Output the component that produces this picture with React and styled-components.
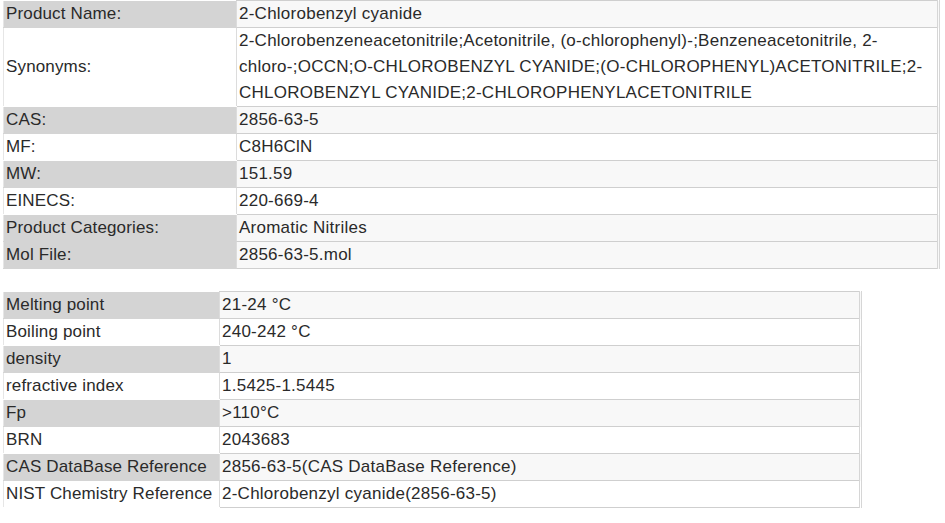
import styled, { createGlobalStyle } from "styled-components";

const GlobalStyle = createGlobalStyle`
  html, body {
    margin: 0;
    padding: 0;
    background: #fff;
  }
  body {
    font-family: "Liberation Sans", Arial, sans-serif;
    color: #2a2a2a;
  }
`;

const Page = styled.div`
  display: flex;
  flex-direction: column;
  gap: 22px;
  padding: 0 0 0 3px;
`;

const Table = styled.table`
  width: ${(p) => p.$width}px;
  border-collapse: collapse;
  border-right: 3px double #d6d6d6;
  font-size: 17px;
  letter-spacing: 0.25px;
  line-height: 26px;
`;

const Label = styled.td`
  width: ${(p) => p.$width}px;
  padding: 0 0 0 2px;
  background: ${(p) => (p.$shade ? "#d4d4d4" : "#fff")};
  border-bottom: 1px solid ${(p) => (p.$shade ? "#d4d4d4" : "#fff")};
  border-left: 1px solid #e6e6e6;
  vertical-align: middle;
  white-space: nowrap;
  letter-spacing: 0.15px;
`;

const Value = styled.td`
  padding: 0 4px 0 2px;
  background: ${(p) => (p.$shade ? "#f8f8f8" : "#fff")};
  border-bottom: 1px solid #cfcfcf;
  border-left: 1px solid #dcdcdc;
  border-top: 1px solid #cfcfcf;
  vertical-align: middle;
`;

const basics = [
  ["Product Name:", "2-Chlorobenzyl cyanide", true],
  [
    "Synonyms:",
    "2-Chlorobenzeneacetonitrile;Acetonitrile, (o-chlorophenyl)-;Benzeneacetonitrile, 2-chloro-;OCCN;O-CHLOROBENZYL CYANIDE;(O-CHLOROPHENYL)ACETONITRILE;2-CHLOROBENZYL CYANIDE;2-CHLOROPHENYLACETONITRILE",
    false,
  ],
  ["CAS:", "2856-63-5", true],
  ["MF:", "C8H6ClN", false],
  ["MW:", "151.59", true],
  ["EINECS:", "220-669-4", false],
  ["Product Categories:", "Aromatic Nitriles", true],
  ["Mol File:", "2856-63-5.mol", true],
];

const props = [
  ["Melting point", "21-24 °C"],
  ["Boiling point", "240-242 °C"],
  ["density", "1"],
  ["refractive index", "1.5425-1.5445"],
  ["Fp", ">110°C"],
  ["BRN", "2043683"],
  ["CAS DataBase Reference", "2856-63-5(CAS DataBase Reference)"],
  ["NIST Chemistry Reference", "2-Chlorobenzyl cyanide(2856-63-5)"],
];

export default function App() {
  return (
    <>
      <GlobalStyle />
      <Page>
        {/* Datos básicos del producto */}
        <Table $width={937}>
          <tbody>
            {basics.map(([k, v, shade]) => (
              <tr key={k}>
                <Label $width={230} $shade={shade}>{k}</Label>
                <Value $shade={shade}>{v}</Value>
              </tr>
            ))}
          </tbody>
        </Table>

        {/* Propiedades químicas */}
        <Table $width={859}>
          <tbody>
            {props.map(([k, v], i) => (
              <tr key={k}>
                <Label $width={213} $shade={i % 2 === 0}>{k}</Label>
                <Value $shade={i % 2 === 0}>{v}</Value>
              </tr>
            ))}
          </tbody>
        </Table>
      </Page>
    </>
  );
}
